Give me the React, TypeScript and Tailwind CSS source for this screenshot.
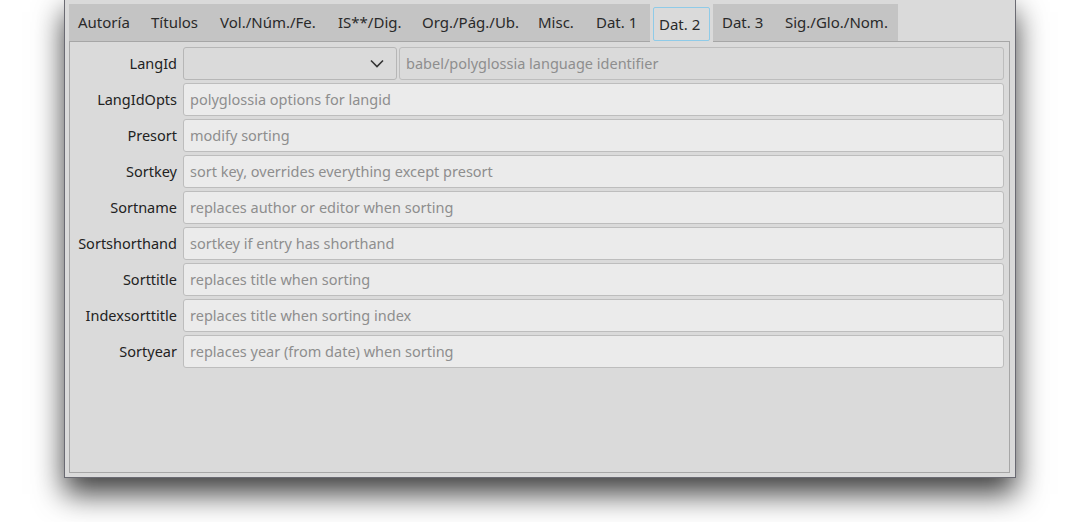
import React from "react";

const tabs: { label: string; w: number; active?: boolean }[] = [
  { label: "Autoría", w: 73 },
  { label: "Títulos", w: 69 },
  { label: "Vol./Núm./Fe.", w: 118 },
  { label: "IS**/Dig.", w: 84 },
  { label: "Org./Pág./Ub.", w: 116 },
  { label: "Misc.", w: 58 },
  { label: "Dat. 1", w: 63 },
  { label: "Dat. 2", w: 63, active: true },
  { label: "Dat. 3", w: 63 },
  { label: "Sig./Glo./Nom.", w: 122 },
];

const rows: { label: string; placeholder: string }[] = [
  { label: "LangIdOpts", placeholder: "polyglossia options for langid" },
  { label: "Presort", placeholder: "modify sorting" },
  { label: "Sortkey", placeholder: "sort key, overrides everything except presort" },
  { label: "Sortname", placeholder: "replaces author or editor when sorting" },
  { label: "Sortshorthand", placeholder: "sortkey if entry has shorthand" },
  { label: "Sorttitle", placeholder: "replaces title when sorting" },
  { label: "Indexsorttitle", placeholder: "replaces title when sorting index" },
  { label: "Sortyear", placeholder: "replaces year (from date) when sorting" },
];

export default function App() {
  return (
    <div
      className="relative w-[1080px] h-[522px] overflow-hidden bg-white"
      style={{ fontFamily: '"Noto Sans", "Open Sans", sans-serif' }}
    >
      <div className="absolute left-[64px] top-[-4px] w-[952px] h-[482px] bg-[#dadada] border border-[#6a6a72] shadow-[0_16px_28px_rgba(0,0,0,0.75)] pl-[4px] pr-[5px] pt-[7px] pb-[4px] flex flex-col">
        {/* tab bar */}
        <div className="flex h-[38px] relative z-10">
          <div className="flex bg-[#c4c4c4] h-[37px]">
            {tabs.map((t) =>
              t.active ? (
                <div
                  key={t.label}
                  className="h-[38px] bg-[#dadada] pt-[3px] px-[3px] -mb-[1px]"
                  style={{ width: t.w }}
                >
                  <div className="h-[34px] border border-[#8fcbe8] rounded-[2px] flex items-center pl-[5px] text-[15px] text-[#2a2a2a]">
                    {t.label}
                  </div>
                </div>
              ) : (
                <div
                  key={t.label}
                  className="h-[37px] flex items-center pl-[9px] text-[15px] text-[#2a2a2a] whitespace-nowrap"
                  style={{ width: t.w }}
                >
                  {t.label}
                </div>
              )
            )}
          </div>
        </div>
        {/* panel */}
        <div className="flex-1 border border-[#a6a6a6] -mt-[1px] pt-[5px] pr-[5px] flex flex-col gap-[3px]">
          <div className="flex items-center h-[33px]">
            <div className="w-[113px] text-right pr-[6px] text-[14.5px] text-[#222] pt-[1px]">LangId</div>
            <div className="w-[214px] h-[33px] border border-[#b6b6b6] rounded-[3px] bg-[#dadada] flex items-center justify-end pr-[12px]">
              <svg width="14" height="9" viewBox="0 0 14 9" fill="none">
                <path d="M1 1.5 L7 7.5 L13 1.5" stroke="#333" strokeWidth="1.6" />
              </svg>
            </div>
            <div className="ml-[2px] flex-1 h-[33px] border border-[#bdbdbd] rounded-[3px] bg-[#dadada] flex items-center pl-[6px] pt-[1px] text-[14.5px] text-[#8e8e8e]">
              babel/polyglossia language identifier
            </div>
          </div>
          {rows.map((r) => (
            <div key={r.label} className="flex items-center h-[33px]">
              <div className="w-[113px] text-right pr-[6px] text-[14.5px] text-[#222] whitespace-nowrap pt-[1px]">{r.label}</div>
              <div className="flex-1 h-[33px] border border-[#bdbdbd] rounded-[3px] bg-[#ebebeb] flex items-center pl-[6px] pt-[1px] text-[14.5px] text-[#8e8e8e]">
                {r.placeholder}
              </div>
            </div>
          ))}
        </div>
      </div>
    </div>
  );
}
